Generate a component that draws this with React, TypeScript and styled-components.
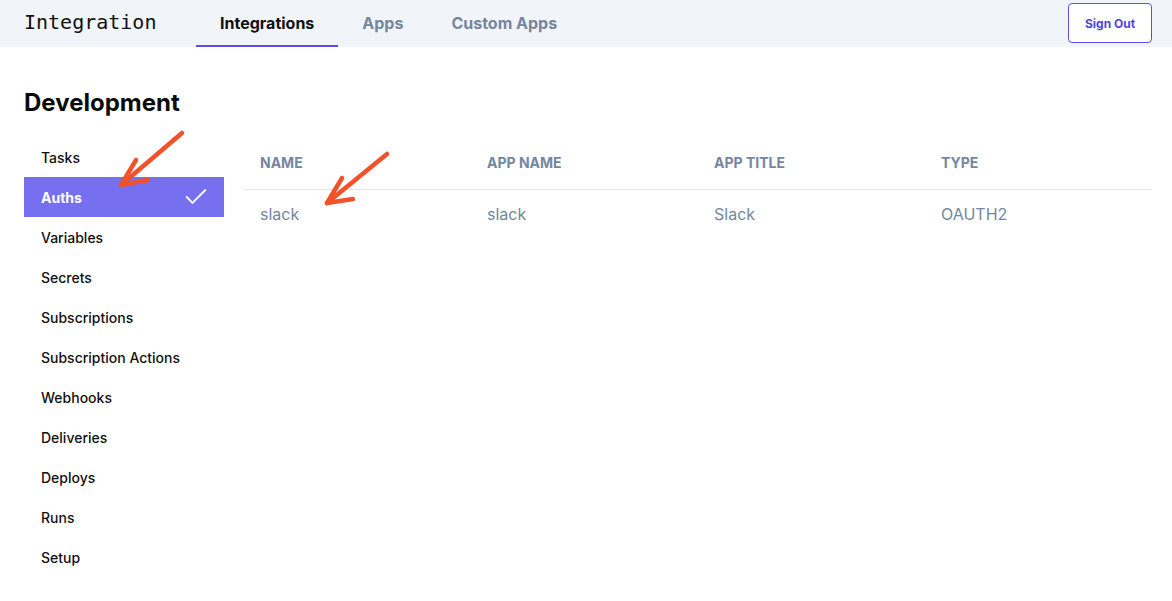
import React from "react";
import styled, { createGlobalStyle } from "styled-components";

const Global = createGlobalStyle`
  html, body { margin: 0; padding: 0; background: #ffffff; }
  body { font-family: Inter, "Noto Sans", sans-serif; color: #111111; }
  * { box-sizing: border-box; }
`;

const Page = styled.div`
  position: relative;
  width: 1172px;
  height: 601px;
  overflow: hidden;
`;

const TopBar = styled.header`
  height: 47px;
  background: #f1f4f8;
  display: flex;
  align-items: stretch;
  padding: 0 20px 0 24px;
`;

const Logo = styled.div`
  font-family: "DejaVu Sans Mono", "Liberation Mono", monospace;
  font-size: 20px;
  color: #111111;
  display: flex;
  align-items: center;
  padding-bottom: 3px;
  margin-right: 40px;
  width: 132px;
  white-space: nowrap;
`;

const Tabs = styled.nav`
  display: flex;
  align-items: stretch;
  flex: 1;
`;

const Tab = styled.div<{ $active?: boolean }>`
  display: flex;
  align-items: center;
  padding: 0 24px;
  font-size: 16px;
  font-weight: 700;
  color: ${(p) => (p.$active ? "#111111" : "#7486a0")};
  border-bottom: 2px solid ${(p) => (p.$active ? "#5b4ee9" : "transparent")};
`;

const SignOut = styled.button`
  align-self: flex-start;
  margin-top: 3px;
  width: 84px;
  height: 40px;
  background: #ffffff;
  border: 1px solid #5b4ee9;
  border-radius: 4px;
  color: #5044e0;
  font-family: Inter, sans-serif;
  font-size: 12px;
  font-weight: 700;
`;

const Main = styled.main`
  padding: 43px 20px 0 24px;
`;

const Heading = styled.h1`
  margin: 0 0 21px 0;
  font-size: 24px;
  font-weight: 700;
  line-height: 26px;
  color: #0b0b0b;
`;

const Body = styled.div`
  display: flex;
  gap: 20px;
`;

const Sidebar = styled.ul`
  list-style: none;
  margin: 0;
  padding: 0;
  width: 200px;
  flex: none;
`;

const NavItem = styled.li<{ $active?: boolean }>`
  height: 40px;
  display: flex;
  align-items: center;
  justify-content: space-between;
  padding: 0 14px 0 17px;
  font-size: 14px;
  font-weight: ${(p) => (p.$active ? 700 : 500)};
  color: ${(p) => (p.$active ? "#ffffff" : "#111111")};
  background: ${(p) => (p.$active ? "#7670f1" : "transparent")};
`;

const TableWrap = styled.div`
  flex: 1;
  min-width: 0;
`;

const Table = styled.table`
  width: 100%;
  border-collapse: collapse;
  table-layout: fixed;
`;

const Th = styled.th`
  text-align: left;
  padding: 16px 16px 16px;
  font-size: 14px;
  font-weight: 700;
  line-height: 20px;
  color: #7486a0;
  border-bottom: 1px solid #e2e6eb;
  text-transform: uppercase;
`;

const Td = styled.td`
  padding: 14px 16px;
  font-size: 16px;
  font-weight: 400;
  line-height: 20px;
  color: #7486a0;
`;

const Overlay = styled.svg`
  position: absolute;
  left: 0;
  top: 0;
  pointer-events: none;
`;

const items = [
  "Tasks",
  "Auths",
  "Variables",
  "Secrets",
  "Subscriptions",
  "Subscription Actions",
  "Webhooks",
  "Deliveries",
  "Deploys",
  "Runs",
  "Setup",
];

const CheckIcon = () => (
  <svg width="28" height="28" viewBox="0 0 24 24" fill="none" stroke="#ffffff" strokeWidth="1.6" strokeLinecap="round" strokeLinejoin="round">
    <path d="M20 6 9 17l-5-5" />
  </svg>
);

export default function App() {
  return (
    <Page>
      <Global />
      <TopBar>
        <Logo>Integration</Logo>
        <Tabs>
          <Tab $active>Integrations</Tab>
          <Tab>Apps</Tab>
          <Tab>Custom Apps</Tab>
        </Tabs>
        <SignOut>Sign Out</SignOut>
      </TopBar>
      <Main>
        <Heading>Development</Heading>
        <Body>
          <Sidebar>
            {items.map((it) => (
              <NavItem key={it} $active={it === "Auths"}>
                {it}
                {it === "Auths" && <CheckIcon />}
              </NavItem>
            ))}
          </Sidebar>
          <TableWrap>
            <Table>
              <thead>
                <tr>
                  <Th>Name</Th>
                  <Th>App Name</Th>
                  <Th>App Title</Th>
                  <Th>Type</Th>
                </tr>
              </thead>
              <tbody>
                <tr>
                  <Td>slack</Td>
                  <Td>slack</Td>
                  <Td>Slack</Td>
                  <Td>OAUTH2</Td>
                </tr>
              </tbody>
            </Table>
          </TableWrap>
        </Body>
      </Main>
      <Overlay width="1172" height="601" viewBox="0 0 1172 601">
        <g fill="none" stroke="#f2522a" strokeWidth="4.5" strokeLinecap="round" strokeLinejoin="round">
          <path d="M182 133 L121 185" />
          <path d="M136 160 L121 185 L148 180" />
          <path d="M387 154 L327 203" />
          <path d="M342 178 L327 203 L353 199" />
        </g>
      </Overlay>
    </Page>
  );
}
